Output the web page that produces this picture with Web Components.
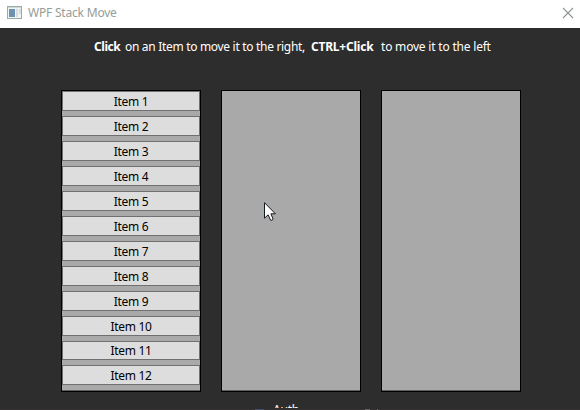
<!DOCTYPE html>
<html lang="en"><head><meta charset="utf-8"><title>WPF Stack Move</title>
<style>
html,body{margin:0;width:580px;height:410px;overflow:hidden;background:#2d2d2d}
body{font:12px "Noto Sans","Open Sans",sans-serif}
</style></head><body>
<app-window>
<title-bar slot="title">WPF Stack Move</title-bar>
<hint-line></hint-line>
<stack-board></stack-board>
<footer-strip slot="footer"></footer-strip>
</app-window>
<mouse-pointer></mouse-pointer>
<script>
const define=(name,html,init)=>customElements.define(name,class extends HTMLElement{
  constructor(){super();this.attachShadow({mode:'open'}).innerHTML=html;}
  connectedCallback(){if(init&&!this.ready){this.ready=true;init(this);}}
});
define('title-bar',`<style>
:host{display:flex;box-sizing:border-box;height:28px;background:#fff;color:#949d99;padding:0 6px 3px 7px;align-items:center}
.icon{width:16px;height:14px;margin-right:5px}
span{flex:1;white-space:pre;letter-spacing:-.2px;line-height:16px}
</style>
<svg class="icon" viewBox="0 0 16 14"><rect x=".5" y=".5" width="14" height="12" fill="#f1f4f1" stroke="#9da9a5"/><path d="M1 1.5h13" stroke="#d0d6d1"/><path d="M2 3h6v8H2z" fill="#6d91b0"/><path d="M9 3h2v8H9zM12 3h2v5h-2z" fill="#d5dce2"/></svg>
<span><slot></slot></span>
<svg width="12" height="12" viewBox="0 0 12 12"><path d="M1 1l10 10M11 1L1 11" stroke="#8e9692" stroke-width="1.1"/></svg>`);
define('hint-line',`<style>
:host{display:flex;height:16px;line-height:16px;color:#fff;padding:11px 0 0 94px;white-space:pre}
b{font-weight:700}.a{width:31px;letter-spacing:-.45px}.b{width:186px;letter-spacing:-.31px}.c{width:70px;letter-spacing:-.22px}.d{letter-spacing:-.2px}
</style><b class="a">Click</b><span class="b">on an Item to move it to the right,</span><b class="c">CTRL+Click</b><span class="d">to move it to the left</span>`);
define('stack-item',`<style>
:host{display:flex;box-sizing:border-box;height:20px;border:1px solid #707070;background:#ddd;color:#000;justify-content:center;line-height:18px}
:host([short]){height:19px}
span{padding-top:1px;height:17px;white-space:pre;letter-spacing:-.3px}
:host([short]) span{padding-top:0}
</style><span><slot></slot></span>`);
define('stack-column',`<style>
:host{display:flex;flex-direction:column;gap:5px;box-sizing:border-box;width:140px;height:302px;border:1px solid #000;background:#a9a9a9;box-shadow:inset 0 -1px #5d635f}
</style><slot></slot>`);
define('stack-board',`<style>
:host{display:flex;gap:20px;padding:35px 0 0 61px}
</style><stack-column id="first"></stack-column><stack-column></stack-column><stack-column></stack-column>`,host=>{
  const column=host.shadowRoot.getElementById('first');
  for(let i=1;i<=12;i++){
    const item=document.createElement('stack-item');
    item.textContent='Item '+i;
    if(i===11)item.setAttribute('short','');
    column.append(item);
  }
});
define('footer-strip',`<style>
:host{display:block;height:8px;overflow:hidden;color:#fff}
div{padding:2px 0 0 273px;line-height:16px;white-space:pre;letter-spacing:-.2px}
</style><div>Auth</div>`);
define('app-window',`<style>
:host{display:flex;flex-direction:column;width:580px;height:410px;background:#2d2d2d}
main{flex:1}
footer{height:9px}
.edge{height:1px;background:linear-gradient(90deg,transparent 255px,#46506b 255px 264px,transparent 264px 365px,#696366 365px 370px,transparent 370px 377px,#777174 377px 378px,transparent 378px),#382f33}
</style><slot name="title"></slot><main><slot></slot></main><footer><slot name="footer"></slot></footer><div class="edge"></div>`);
define('mouse-pointer',`<style>
:host{position:absolute;left:264px;top:202px;width:13px;height:20px}
svg{display:block}
</style><svg width="13" height="20" viewBox="0 0 13 20"><path d="M.5.7V16.2L4.1 12.8L6.6 18.2Q8 18.8 9.2 17.2L6.9 11.8H11.4Z" fill="#fff" stroke="#101820"/></svg>`);
</script></body></html>
